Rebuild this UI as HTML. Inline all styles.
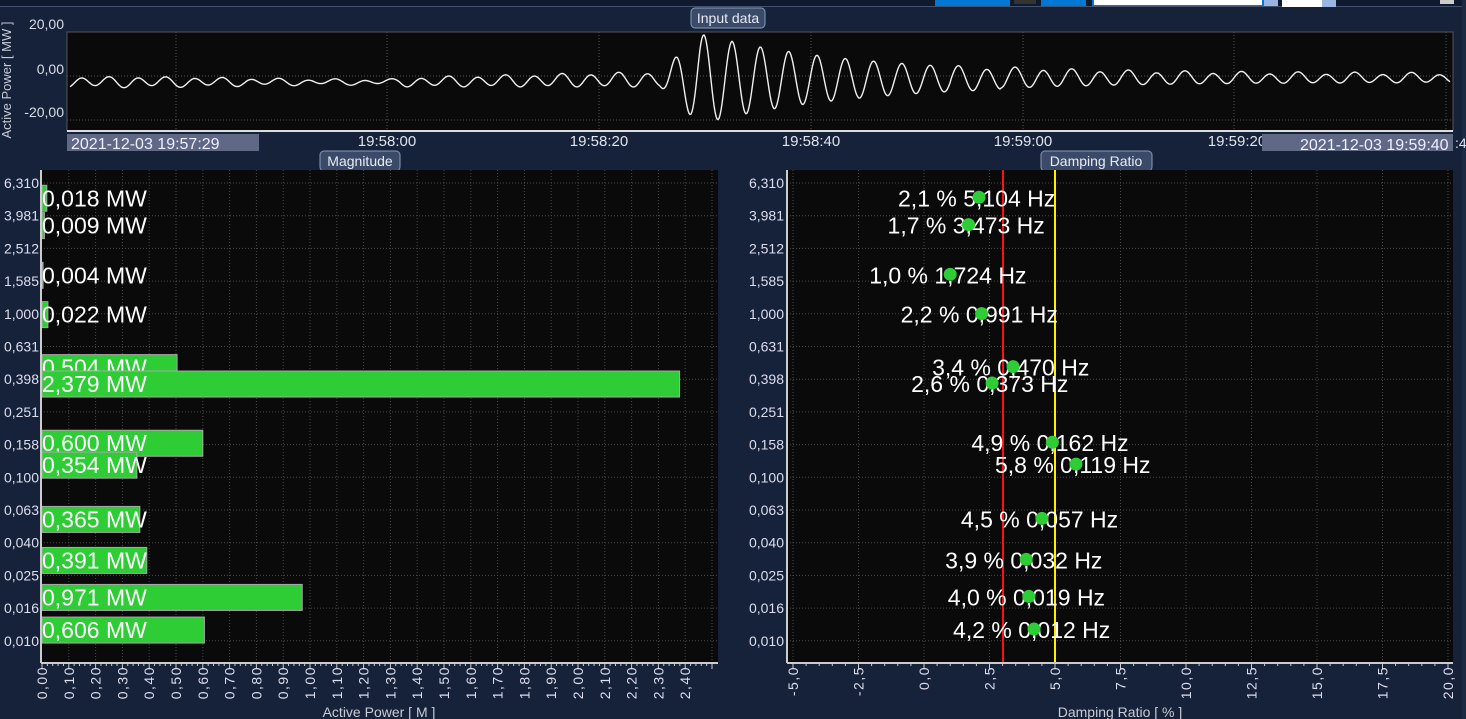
<!DOCTYPE html>
<html><head><meta charset="utf-8"><style>
html,body{margin:0;padding:0;background:#15223a;overflow:hidden}
svg{display:block}
text{font-family:"Liberation Sans",Arial,sans-serif}
</style></head><body>
<svg id="s" width="1466" height="719" xmlns="http://www.w3.org/2000/svg">
<rect width="1466" height="719" fill="#15223a"/>
<rect x="0" y="0" width="1466" height="6" fill="#101a2e"/>
<rect x="0" y="6" width="1466" height="1" fill="#44526e"/>
<rect x="935" y="0" width="75" height="6" fill="#0078d4"/>
<rect x="1014" y="0" width="22" height="4" fill="#333"/>
<rect x="1041" y="0" width="45" height="6" fill="#0078d4"/>
<rect x="1092" y="0" width="172" height="6" fill="#0078d4"/>
<rect x="1094" y="0" width="168" height="5" fill="#fff"/>
<rect x="1264" y="0" width="14" height="6" fill="#9ab6e0"/>
<rect x="1282" y="0" width="40" height="7" fill="#fff"/>
<rect x="1322" y="0" width="14" height="7" fill="#9ab6e0"/>
<rect x="1440" y="0" width="14" height="4" fill="#ccc"/>
<rect x="1462" y="0" width="4" height="719" fill="#1c2a44"/>

<rect x="67" y="32" width="1386" height="99" fill="#0a0a0a" stroke="#555" stroke-width="1"/>
<line x1="67" y1="131" x2="1453" y2="131" stroke="#ddd" stroke-width="2"/>
<g id="topgrid" stroke="#555" stroke-dasharray="1,2" stroke-width="1"></g>
<path id="wave" fill="none" stroke="#f0f0f0" stroke-width="1.4"/>
<g font-size="14" fill="#d8dce6" text-anchor="end">
<text x="64" y="29">20,00</text><text x="64" y="74">0,00</text><text x="64" y="117">-20,00</text>
</g>
<text transform="translate(11,80) rotate(-90)" font-size="13" fill="#c8ccd6" text-anchor="middle">Active Power [ MW ]</text>
<rect x="67" y="134" width="192" height="17" fill="#5f6885"/>
<text x="71" y="149" font-size="16" fill="#eef">2021-12-03 19:57:29</text>
<g font-size="15" fill="#e0e4ec" text-anchor="middle">
<text x="387" y="146">19:58:00</text><text x="599" y="146">19:58:20</text><text x="811" y="146">19:58:40</text><text x="1023" y="146">19:59:00</text><text x="1237" y="146">19:59:20</text>
</g>
<rect x="1262" y="134" width="191" height="17" fill="#5f6885"/>
<text x="1300" y="150" font-size="16" fill="#eef">2021-12-03 19:59:40</text>
<text x="1455" y="148" font-size="14" fill="#e0e4ec">:4</text>

<g font-size="14" fill="#e8ecf4" text-anchor="middle">
<rect x="691" y="8" width="74" height="20" rx="4" fill="#3b4a68" stroke="#8a9ab8"/>
<text x="728" y="23">Input data</text>
<rect x="320" y="151" width="80" height="20" rx="4" fill="#3b4a68" stroke="#8a9ab8"/>
<text x="360" y="166">Magnitude</text>
<rect x="1041" y="151" width="111" height="20" rx="4" fill="#3b4a68" stroke="#8a9ab8"/>
<text x="1096" y="166">Damping Ratio</text>
</g>

<rect x="41" y="170" width="677" height="492" fill="#0a0a0a"/>
<g id="lgrid" stroke="#4a4a4a" stroke-dasharray="1,2"></g>
<g id="bars"></g>
<line x1="41" y1="170" x2="41" y2="663" stroke="#ccc" stroke-width="2"/>
<line x1="41" y1="663" x2="718" y2="663" stroke="#ccc" stroke-width="2"/>
<g id="lticks" stroke="#ccc"></g>
<g id="lyl" font-size="14" fill="#dde" text-anchor="end"></g>
<g id="lxl" font-size="14" fill="#dde" letter-spacing="1.5"></g>
<text x="379" y="717" font-size="14" fill="#c8ccd6" text-anchor="middle">Active Power [ M ]</text>

<rect x="787" y="170" width="666" height="492" fill="#0a0a0a"/>
<g id="rgrid" stroke="#4a4a4a" stroke-dasharray="1,2"></g>
<line x1="1003" y1="170" x2="1003" y2="662" stroke="#ff1010" stroke-width="2"/>
<line x1="1055" y1="170" x2="1055" y2="662" stroke="#ffee00" stroke-width="2"/>
<g id="pts"></g>
<line x1="787" y1="170" x2="787" y2="663" stroke="#ccc" stroke-width="2"/>
<line x1="787" y1="663" x2="1453" y2="663" stroke="#ccc" stroke-width="2"/>
<g id="rticks" stroke="#ccc"></g>
<g id="ryl" font-size="14" fill="#dde" text-anchor="end"></g>
<g id="rxl" font-size="14" fill="#dde" letter-spacing="1.5"></g>
<text x="1120" y="717" font-size="14" fill="#c8ccd6" text-anchor="middle">Damping Ratio [ % ]</text>
</svg>
<script>
var NS="http://www.w3.org/2000/svg";
function el(p,t,a,txt){var e=document.createElementNS(NS,t);for(var k in a)e.setAttribute(k,a[k]);if(txt!=null)e.textContent=txt;document.getElementById(p).appendChild(e);return e;}
[176,387,599,811,1023,1234,1446].forEach(function(x){el("topgrid","line",{x1:x,y1:32,x2:x,y2:131});});
[32,76,120].forEach(function(y){el("topgrid","line",{x1:67,y1:y,x2:1453,y2:y});});
var d="";
for(var x=70;x<=1450;x+=1){
 var A;
 if(x<400)A=3.5+Math.sin(x*0.013)*1.2;
 else if(x<660)A=4+(x-400)/260*3;
 else if(x<700)A=7+(x-660)/40*38;
 else A=4+41*Math.exp(-(x-700)/160);
 var c=82-(x>400?Math.min((x-400)/300,1)*3:0)+(x>1000?-1:0);
 var y=c+A*Math.sin(2*Math.PI*(x-60)/28.3)+ (x<660||x>950?1.2*Math.sin(x*0.11):0);
 d+=(x==70?"M":"L")+x+","+y.toFixed(1);
}
document.getElementById("wave").setAttribute("d",d);
var yl=["6,310","3,981","2,512","1,585","1,000","0,631","0,398","0,251","0,158","0,100","0,063","0,040","0,025","0,016","0,010"];
yl.forEach(function(t,i){var y=183+i*32.7;
 el("lgrid","line",{x1:41,y1:y,x2:718,y2:y});el("rgrid","line",{x1:787,y1:y,x2:1453,y2:y});
 el("lyl","text",{x:39,y:y+5},t);el("ryl","text",{x:784,y:y+5},t);});
for(var i=0;i<=25;i++){var x=42+i*26.8;
 if(i>0)el("lgrid","line",{x1:x,y1:170,x2:x,y2:662});
 el("lticks","line",{x1:x,y1:663,x2:x,y2:669});
 if(i<25)for(var j=1;j<5;j++)el("lticks","line",{x1:x+j*5.36,y1:663,x2:x+j*5.36,y2:666});
 if(i<=24){var v=(i/10).toFixed(2).replace(".",",");el("lxl","text",{transform:"translate("+(x+5)+",666) rotate(-90)","text-anchor":"end"},v);}
}
for(var i=0;i<=10;i++){var x=793+i*65.5;
 el("rgrid","line",{x1:x,y1:170,x2:x,y2:662});
 el("rticks","line",{x1:x,y1:663,x2:x,y2:669});
 if(i<10)for(var j=1;j<5;j++)el("rticks","line",{x1:x+j*13.1,y1:663,x2:x+j*13.1,y2:666});
 var v=(-5+i*2.5).toFixed(1).replace(".",",");el("rxl","text",{transform:"translate("+(x+5)+",666) rotate(-90)","text-anchor":"end"},v);
}
var data=[[5.104,0.018,2.1],[3.473,0.009,1.7],[1.724,0.004,1.0],[0.991,0.022,2.2],[0.470,0.504,3.4],[0.373,2.379,2.6],[0.162,0.600,4.9],[0.119,0.354,5.8],[0.057,0.365,4.5],[0.032,0.391,3.9],[0.019,0.971,4.0],[0.012,0.606,4.2]];
data.forEach(function(r){
 var y=641-Math.log10(r[0]/0.01)*163.5; if(r[0]<0.1)y+=2;
 var w=Math.max(r[1]*268,1);
 el("bars","rect",{x:42,y:y-13,width:w,height:26,fill:"#2ecc35",stroke:"#a8a8a8","stroke-width":1});
 el("bars","text",{x:42,y:y+8,"font-size":23,fill:"#fff"},r[1].toFixed(3).replace(".",",")+" MW");
 var px=793+(r[2]+5)*26.2;
 var lab=r[2].toFixed(1).replace(".",",")+" % "+r[0].toFixed(3).replace(".",",")+" Hz";
 el("pts","text",{x:px-81,y:y+8,"font-size":23,fill:"#fff"},lab);
 el("pts","circle",{cx:px,cy:y-1,r:6.5,fill:"#2ecc35"});
});
</script>
</body></html>
